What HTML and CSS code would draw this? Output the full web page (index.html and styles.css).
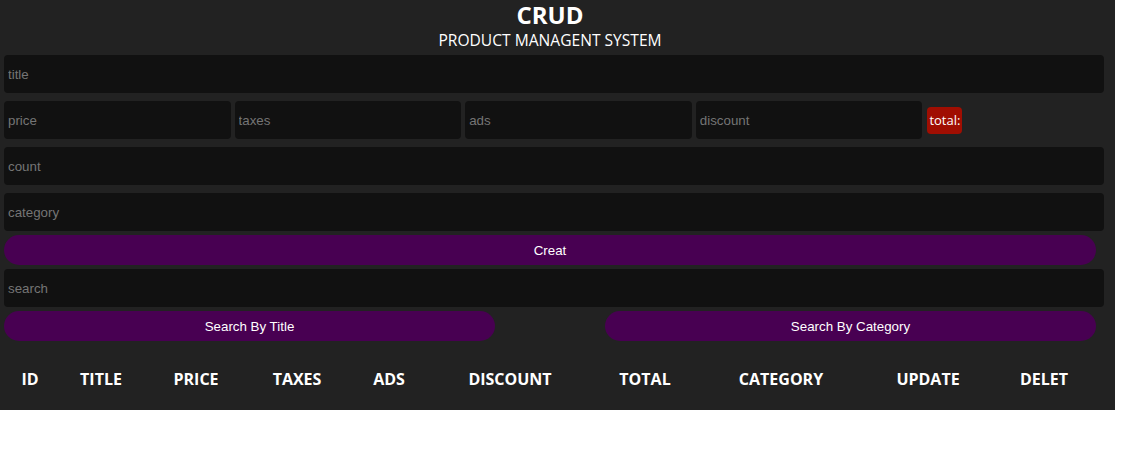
FILE: index.html
```html
<!DOCTYPE html>
<html lang="en">
<head>
<meta charset="utf-8">
<title>CRUD</title>
<link rel="stylesheet" href="styles.css">
</head>
<body>
<div class="page">
  <header class="head">
    <h2 class="brand">CRUD</h2>
    <p class="tagline">PRODUCT MANAGENT SYSTEM</p>
  </header>
  <div class="form">
    <input class="field" type="text" placeholder="title">
    <div class="price-row">
      <input class="field small" type="number" placeholder="price">
      <input class="field small" type="number" placeholder="taxes">
      <input class="field small" type="number" placeholder="ads">
      <input class="field small" type="number" placeholder="discount">
      <small class="total">total:</small>
    </div>
    <input class="field" type="number" placeholder="count">
    <input class="field" type="text" placeholder="category">
    <button class="btn wide">Creat</button>
    <input class="field" type="text" placeholder="search">
    <div class="search-row">
      <button class="btn half">Search By Title</button>
      <button class="btn half">Search By Category</button>
    </div>
  </div>
  <table class="list">
    <thead>
      <tr>
        <th class="c-id">ID</th>
        <th class="c-title">TITLE</th>
        <th class="c-price">PRICE</th>
        <th class="c-taxes">TAXES</th>
        <th class="c-ads">ADS</th>
        <th class="c-discount">DISCOUNT</th>
        <th class="c-total">TOTAL</th>
        <th class="c-category">CATEGORY</th>
        <th class="c-update">UPDATE</th>
        <th class="c-delete">DELET</th>
      </tr>
    </thead>
    <tbody></tbody>
  </table>
</div>
</body>
</html>
```
FILE: styles.css
```css
html, body {
  margin: 0;
  padding: 0;
  background: #ffffff;
}

.page {
  width: 1115px;
  background: #222222;
  color: #ffffff;
  padding-bottom: 3px;
  font-family: "Open Sans", "Noto Sans", sans-serif;
}

.head {
  width: 1100px;
  text-align: center;
}

.brand {
  margin: 0;
  font-size: 24px;
  line-height: 30px;
  font-weight: 700;
}

.tagline {
  margin: 0;
  font-size: 15.6px;
  line-height: 21px;
}

.form {
  display: flex;
  flex-direction: column;
  padding: 0 4px;
}

.field {
  box-sizing: border-box;
  width: 1100px;
  height: 38px;
  margin: 4px 0;
  padding: 0 4px;
  border: none;
  outline: none;
  border-radius: 4px;
  background: #111111;
  color: #ffffff;
  font-family: "Liberation Sans", Arial, sans-serif;
  font-size: 13.33px;
}

.field::placeholder {
  color: #757575;
}

.field::-webkit-outer-spin-button,
.field::-webkit-inner-spin-button {
  -webkit-appearance: none;
  margin: 0;
}

.price-row {
  display: flex;
  align-items: center;
  gap: 4px;
  margin: 4px 0;
}

.price-row .field.small {
  width: 226.6px;
  margin: 0;
}

.total {
  display: block;
  margin-left: 1px;
  padding: 3px 2px 4px;
  border-radius: 4px;
  background: #a00e02;
  color: #ffffff;
  font-family: "Open Sans", sans-serif;
  font-size: 13px;
  line-height: 20px;
}

.btn {
  height: 30px;
  border: none;
  border-radius: 15px;
  background: #480052;
  color: #ffffff;
  font-family: "Liberation Sans", Arial, sans-serif;
  font-size: 13.33px;
  cursor: pointer;
}

.btn.wide {
  width: 1092px;
}

.search-row {
  display: flex;
  justify-content: space-between;
  width: 1092px;
}

.btn.half {
  width: 491px;
}

.list {
  margin-top: 10px;
  margin-left: 4px;
  border-collapse: collapse;
  table-layout: fixed;
  width: 1090px;
}

.list th {
  padding: 16px 0;
  font-size: 16px;
  line-height: 24px;
  font-weight: 700;
  text-align: center;
}

.c-id { width: 52px; }
.c-title { width: 90px; }
.c-price { width: 100px; }
.c-taxes { width: 102px; }
.c-ads { width: 82px; }
.c-discount { width: 160px; }
.c-total { width: 110px; }
.c-category { width: 162px; }
.c-update { width: 132px; }
.c-delete { width: 100px; }
```
